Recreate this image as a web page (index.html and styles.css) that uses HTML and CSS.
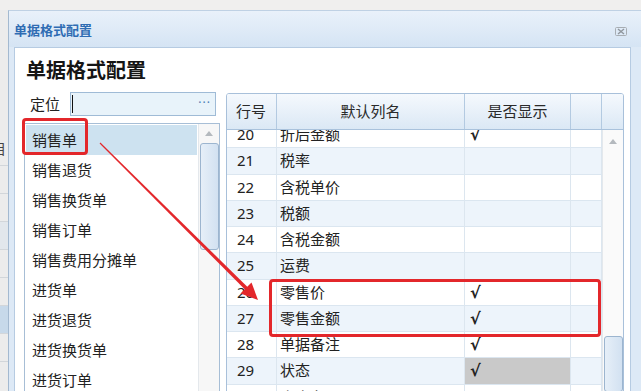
FILE: index.html
```html
<!DOCTYPE html>
<html lang="zh-CN">
<head>
  <meta charset="UTF-8" />
  <title>单据格式配置</title>
  <link rel="stylesheet" href="styles.css">
</head>
<body>
  <div class="page">

    <!-- Window behind the dialog -->
    <div class="backdrop">
      <div class="bd-row bd-glyph">目</div>
      <div class="bd-row"></div>
      <div class="bd-row"></div>
      <div class="bd-row bd-mark"></div>
      <div class="bd-row"></div>
      <div class="bd-row"></div>
      <div class="bd-row bd-sel"></div>
      <div class="bd-row"></div>
    </div>

    <!-- Dialog -->
    <div class="dialog">
      <div class="dialog-title">
        <span>单据格式配置</span>
        <svg class="close-icon" width="12" height="9" viewBox="0 0 12 9">
          <rect x="0.5" y="0.5" width="11" height="8" rx="1" fill="none" stroke="#a7adb3"/>
          <path d="M3 2 L9 7 M9 2 L3 7" stroke="#8f969d" stroke-width="1.4"/>
        </svg>
      </div>

      <div class="panel">
        <h1 class="panel-heading">单据格式配置</h1>

        <div class="content">
          <!-- Bill type list -->
          <div class="left-col">
            <div class="locate">
              <label>定位</label>
              <div class="locate-input"><span class="caret"></span><span class="dots">···</span></div>
            </div>
            <div class="listbox">
              <ul class="list-items">
                <li class="selected">销售单</li>
                <li>销售退货</li>
                <li>销售换货单</li>
                <li>销售订单</li>
                <li>销售费用分摊单</li>
                <li>进货单</li>
                <li>进货退货</li>
                <li>进货换货单</li>
                <li>进货订单</li>
              </ul>
              <div class="vscroll small">
                <span class="arrow-up"></span>
                <span class="thumb"></span>
              </div>
            </div>
          </div>

          <!-- Column grid -->
          <div class="grid">
            <div class="grid-head">
              <div>行号</div>
              <div>默认列名</div>
              <div>是否显示</div>
              <div></div>
              <div></div>
            </div>
            <div class="grid-body">
              <div class="rows">
                <div class="row"><div>20</div><div>折后金额</div><div>√</div><div></div></div>
                <div class="row"><div>21</div><div>税率</div><div></div><div></div></div>
                <div class="row"><div>22</div><div>含税单价</div><div></div><div></div></div>
                <div class="row"><div>23</div><div>税额</div><div></div><div></div></div>
                <div class="row"><div>24</div><div>含税金额</div><div></div><div></div></div>
                <div class="row"><div>25</div><div>运费</div><div></div><div></div></div>
                <div class="row"><div>26</div><div>零售价</div><div>√</div><div></div></div>
                <div class="row"><div>27</div><div>零售金额</div><div>√</div><div></div></div>
                <div class="row"><div>28</div><div>单据备注</div><div>√</div><div></div></div>
                <div class="row"><div>29</div><div>状态</div><div class="cell-active">√</div><div></div></div>
                <div class="row"><div>30</div><div>仓库名</div><div></div><div></div></div>
              </div>
              <div class="vscroll big">
                <span class="arrow-up"></span>
                <span class="thumb"></span>
              </div>
            </div>
          </div>
        </div>
      </div>
    </div>
  </div>

  <!-- Annotations -->
  <div class="mark mark-bill"></div>
  <div class="mark mark-rows"></div>
  <svg class="mark-arrow" width="641" height="391" viewBox="0 0 641 391">
    <polygon points="100.4,142.6 248.3,287.7 245.7,290.3 99.6,143.4" fill="#e3272b"/>
    <polygon points="258,300 251.5,282.5 240.5,293.5" fill="#e3272b"/>
  </svg>
</body>
</html>
```

FILE: styles.css
```css
/* Base */
* { margin: 0; padding: 0; box-sizing: border-box; }
body {
  width: 641px; height: 391px; overflow: hidden;
  position: relative;
  background: #f0efee;
  font-family: "Noto Sans", "Noto Sans CJK SC", sans-serif;
  font-size: 15px;
  color: #222;
}
ul { list-style: none; }

.page { display: flex; height: 391px; padding-top: 10px; }

/* Window behind the dialog */
.backdrop {
  width: 8px; flex: none;
  background: #ececec;
  display: flex; flex-direction: column;
  padding-top: 126px;
  overflow: hidden;
}
.bd-row { height: 28px; border-bottom: 1px solid #d2d6da; font-size: 14px; line-height: 28px; color: #444; }
.bd-glyph { height: 30px; line-height: 26px; text-indent: -8px; }
.bd-mark { background: #e2e7ec; }
.bd-sel { background: #c7d9ea; }

/* Dialog frame */
.dialog {
  flex: 1;
  display: flex; flex-direction: column;
  background: #dde9f6;
  border-left: 1px solid #a3b9d0;
  border-top: 1px solid #bfd1e4;
}
.dialog-title {
  height: 36px; flex: none;
  display: flex; justify-content: space-between; align-items: center;
  padding: 0 14px 0 5px;
  background: linear-gradient(to bottom, #e9f1fa, #d5e4f4);
  color: #2f6cb3; font-size: 13px; font-weight: bold;
}
.close-icon { margin-top: 4px; }

/* White panel */
.panel {
  width: 617px; flex: 1;
  margin-left: 5px;
  background: #fff;
  border: 1px solid #b6cbe2;
  padding: 0 0 0 9px;
}
.panel-heading {
  font-size: 20px; font-weight: bold; line-height: 28px;
  color: #151515;
  margin-top: 9px; padding-left: 2px;
}
.content { display: flex; gap: 6px; margin-top: 7px; align-items: flex-start; }

/* Left column */
.left-col { width: 196px; flex: none; }
.locate { display: flex; align-items: center; height: 24px; }
.locate label { width: 46px; padding-left: 6px; line-height: 24px; }
.locate-input {
  width: 146px; height: 24px;
  display: flex; justify-content: space-between; align-items: center;
  background: #e8f3fa;
  border: 1px solid #9fbbd6;
  padding: 0 4px 0 1px;
}
.caret { width: 1px; height: 18px; background: #111; }
.dots { color: #4d7db4; font-size: 12px; letter-spacing: 1px; line-height: 12px; padding-bottom: 2px; }

.listbox {
  margin-top: 7px; height: 280px;
  display: flex;
  border: 1px solid #a7bed6;
}
.list-items { flex: 1; padding: 1px; }
.list-items li { height: 30px; line-height: 30px; padding-left: 6px; }
.list-items li.selected { background: #cde2f0; }

/* Scrollbars */
.vscroll {
  width: 21px; flex: none;
  display: flex; flex-direction: column; align-items: center;
  background: #f7f7f7;
  border-left: 1px solid #e4e8ec;
}
.arrow-up {
  width: 0; height: 0; margin-top: 7px;
  border-left: 4px solid transparent; border-right: 4px solid transparent;
  border-bottom: 5px solid #b4b9be;
}
.thumb {
  width: 19px;
  border: 1px solid #9cb5cf; border-radius: 3px;
  background: linear-gradient(to right, #e6eff8, #d2e1f1);
}
.vscroll.small .thumb { margin-top: 7px; height: 107px; }
.vscroll.big { background: #fafafa; }
.vscroll.big .arrow-up { margin-top: 9px; }
.vscroll.big .thumb { margin-top: 192px; height: 80px; }

/* Grid */
.grid {
  width: 398px; flex: none; height: 300px;
  margin-top: 1px;
  border: 1px solid #a8c0da; border-radius: 3px 3px 0 0;
  display: flex; flex-direction: column;
  overflow: hidden;
}
.grid-head {
  height: 36px; flex: none;
  display: grid; grid-template-columns: 50px 188px 106px 31px 21px;
  background: linear-gradient(to bottom, #f5f9fd, #dbe8f5);
  border-bottom: 1px solid #a9c2dc;
}
.grid-head div {
  border-right: 1px solid #b3cae1;
  text-align: center; line-height: 35px;
  color: #2a2a2a;
}
.grid-head div:nth-child(1) { text-align: left; padding-left: 9px; }
.grid-head div:last-child { border-right: none; }

.grid-body { flex: 1; display: flex; overflow: hidden; }
.rows { flex: 1; margin-top: -8px; }
.row {
  height: 26.25px;
  display: grid; grid-template-columns: 50px 188px 106px 31px;
  border-bottom: 1px solid #dbe6f0;
  line-height: 25px;
}
.row:nth-child(even) { background: #edf4fb; }
.row div { border-right: 1px solid #dce6ef; white-space: nowrap; overflow: hidden; }
.row div:nth-child(1) { padding-left: 10px; }
.row div:nth-child(2) { padding-left: 3px; }
.row div:nth-child(3) {
  padding-left: 5px;
  font-family: "DejaVu Sans", sans-serif; font-weight: bold; font-size: 16px;
}
.row div.cell-active { background: #c9c9c9; }

/* Annotations (drawn over the dialog) */
.mark {
  position: absolute;
  border: 3px solid #e3272b; border-radius: 4px;
}
.mark-bill { left: 22px; top: 118px; width: 66px; height: 37px; }
.mark-rows { left: 269px; top: 279px; width: 332px; height: 58px; }
.mark-arrow { position: absolute; left: 0; top: 0; }
```
